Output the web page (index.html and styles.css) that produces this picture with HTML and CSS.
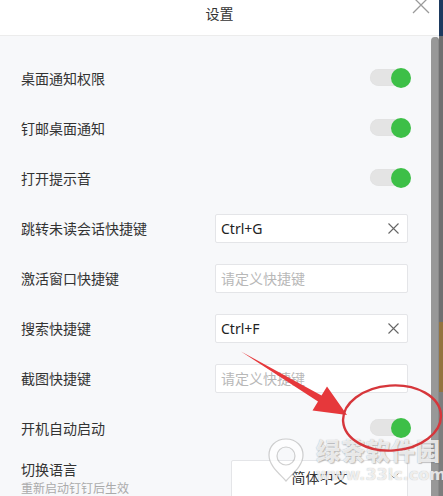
FILE: index.html
```html
<!DOCTYPE html>
<html lang="zh-CN">
<head>
<meta charset="utf-8">
<title>设置</title>
<link rel="stylesheet" href="styles.css">
</head>
<body>
<div class="screen">
  <div class="panel">
    <div class="header">
      <span class="title">设置</span>
      <svg class="close" width="18" height="18" viewBox="0 0 18 18"><path d="M1 1 L17 17 M17 1 L1 17" stroke="#9a9a9a" stroke-width="1.3" fill="none"/></svg>
    </div>
    <div class="content">
      <div class="list">
        <div class="row"><span class="label">桌面通知权限</span><span class="toggle"></span></div>
        <div class="row"><span class="label">钉邮桌面通知</span><span class="toggle"></span></div>
        <div class="row"><span class="label">打开提示音</span><span class="toggle"></span></div>
        <div class="row"><span class="label">跳转未读会话快捷键</span>
          <div class="input"><span class="value">Ctrl+G</span><svg class="clear" width="11" height="11" viewBox="0 0 11 11"><path d="M0.5 0.5 L10.5 10.5 M10.5 0.5 L0.5 10.5" stroke="#666" stroke-width="1.1" fill="none"/></svg></div>
        </div>
        <div class="row"><span class="label">激活窗口快捷键</span>
          <div class="input"><span class="placeholder">请定义快捷键</span></div>
        </div>
        <div class="row"><span class="label">搜索快捷键</span>
          <div class="input"><span class="value">Ctrl+F</span><svg class="clear" width="11" height="11" viewBox="0 0 11 11"><path d="M0.5 0.5 L10.5 10.5 M10.5 0.5 L0.5 10.5" stroke="#666" stroke-width="1.1" fill="none"/></svg></div>
        </div>
        <div class="row"><span class="label">截图快捷键</span>
          <div class="input"><span class="placeholder">请定义快捷键</span></div>
        </div>
        <div class="row"><span class="label">开机自动启动</span><span class="toggle"></span></div>
        <div class="row lang">
          <div class="labels"><span class="label">切换语言</span><span class="sub">重新启动钉钉后生效</span></div>
          <div class="select"><span>简体中文</span><svg class="chev" width="10" height="6" viewBox="0 0 10 6"><path d="M0.5 0.5 L5 5 L9.5 0.5" stroke="#999" fill="none"/></svg></div>
        </div>
      </div>
      <div class="scrollbar"></div>
    </div>
  </div>
  <div class="desktop"></div>

  <div class="watermark">
    <svg class="wm-logo" width="40" height="48" viewBox="0 0 40 48"><path d="M20 3 C9 3 3 11 3 19 C3 30 14 38 20 45 C26 38 37 30 37 19 C37 11 31 3 20 3 Z M20 11 C25 11 29 15 29 20 C29 25 25 29 20 29 C15 29 11 25 11 20 C11 15 15 11 20 11 Z" fill="rgba(255,255,255,0.75)" stroke="rgba(150,150,150,0.45)" stroke-width="1.2"/></svg>
    <div class="wm-text"><span class="wm-name">绿茶软件园</span><span class="wm-url">www.33lc.com</span></div>
  </div>

  <svg class="annot" width="443" height="496" viewBox="0 0 443 496">
    <path d="M241 351.5 L321.5 395.5 L327 386.5 L347 415 L312.5 410.5 L318 401.5 Z" fill="#e6383b"/>
    <ellipse cx="392" cy="418" rx="49" ry="32.5" transform="rotate(-4 392 418)" fill="none" stroke="#d6363b" stroke-width="2.4"/>
  </svg>
</div>
</body>
</html>
```
FILE: styles.css
```css
* { box-sizing: border-box; }
html, body { margin: 0; padding: 0; }
body {
  width: 443px;
  height: 496px;
  overflow: hidden;
  font-family: "Noto Sans", "Noto Sans CJK SC", sans-serif;
  color: #333;
  background: #f7f8fa;
}
.screen {
  position: relative;
  display: flex;
  width: 443px;
  height: 496px;
}
.panel {
  width: 439px;
  display: flex;
  flex-direction: column;
  background: #f7f8fa;
}
.header {
  position: relative;
  height: 36px;
  flex: none;
  background: #fff;
  border-bottom: 1px solid #ececec;
  display: flex;
  justify-content: center;
  padding-top: 3px;
}
.title {
  font-family: "Noto Sans CJK SC", sans-serif;
  font-size: 14px;
  line-height: 20px;
  color: #333;
}
.close {
  position: absolute;
  left: 412px;
  top: -4px;
}
.content {
  flex: 1;
  display: flex;
  min-height: 0;
}
.list {
  width: 431px;
  padding: 17px 23px 0 21px;
  display: flex;
  flex-direction: column;
}
.row {
  height: 50px;
  flex: none;
  display: flex;
  align-items: center;
  justify-content: space-between;
}
.label {
  font-family: "Noto Sans CJK SC", sans-serif;
  font-size: 14px;
  line-height: 20px;
  color: #333;
}
.toggle {
  position: relative;
  width: 36px;
  height: 17px;
  border-radius: 9px;
  background: #e4e4e4;
  box-shadow: inset 0 0 1px rgba(0,0,0,0.08);
  margin-right: 2px;
  margin-top: -1px;
}
.toggle::after {
  content: "";
  position: absolute;
  right: -5px;
  top: -1.5px;
  width: 20px;
  height: 20px;
  border-radius: 50%;
  background: #3dbf47;
}
.input {
  width: 193px;
  height: 29px;
  background: #fff;
  border: 1px solid #e4e5e8;
  border-radius: 2px;
  display: flex;
  align-items: center;
  justify-content: space-between;
  padding: 0 8px 0 5px;
  font-size: 14px;
}
.value {
  font-family: "Noto Sans", "Noto Sans CJK SC", sans-serif;
  font-size: 14px;
  color: #222;
}
.placeholder {
  font-family: "Noto Sans CJK SC", sans-serif;
  font-size: 14px;
  color: #b8b8b8;
}
.clear { display: block; }
.row.lang {
  height: auto;
  align-items: flex-start;
  padding-top: 6px;
}
.labels {
  display: flex;
  flex-direction: column;
}
.sub {
  font-family: "Noto Sans CJK SC", sans-serif;
  font-size: 12px;
  line-height: 18px;
  color: #aaa;
}
.select {
  width: 177px;
  height: 40px;
  margin-top: 1px;
  background: #fff;
  border: 1px solid #e4e5e8;
  border-radius: 2px;
  display: flex;
  justify-content: center;
  align-items: flex-start;
  padding-top: 6px;
  position: relative;
  font-family: "Noto Sans CJK SC", sans-serif;
  font-size: 14px;
  color: #333;
}
.chev {
  position: absolute;
  right: 8px;
  top: 12px;
}
.scrollbar {
  width: 8px;
  margin-top: 1px;
  background: #989898;
  border-radius: 4px 4px 0 0;
  box-shadow: inset -1px 0 0 #8a8a8a;
}
.desktop {
  width: 4px;
  background: linear-gradient(to bottom, #1d3a60 0, #1d3a60 36px, #6f6f70 36px, #6f6f70 322px, #94743f 322px, #94743f 392px, #7d7d7d 392px);
}
.watermark {
  position: absolute;
  left: 266px;
  top: 436px;
  display: flex;
  gap: 10px;
  pointer-events: none;
}
.wm-text {
  display: flex;
  flex-direction: column;
  align-items: flex-start;
}
.wm-name {
  font-family: "Noto Sans CJK SC", sans-serif;
  font-weight: 900;
  font-size: 24px;
  line-height: 28px;
  letter-spacing: 1px;
  color: rgba(255,255,255,0.8);
  text-shadow: 0 0 1px rgba(120,120,120,0.6), 1px 1px 1px rgba(120,120,120,0.4);
}
.wm-url {
  font-family: "DejaVu Sans", sans-serif;
  font-weight: bold;
  font-size: 16px;
  line-height: 22px;
  color: rgba(255,255,255,0.8);
  text-shadow: 0 0 1px rgba(120,120,120,0.6);
}
.annot {
  position: absolute;
  left: 0;
  top: 0;
  pointer-events: none;
}
```
